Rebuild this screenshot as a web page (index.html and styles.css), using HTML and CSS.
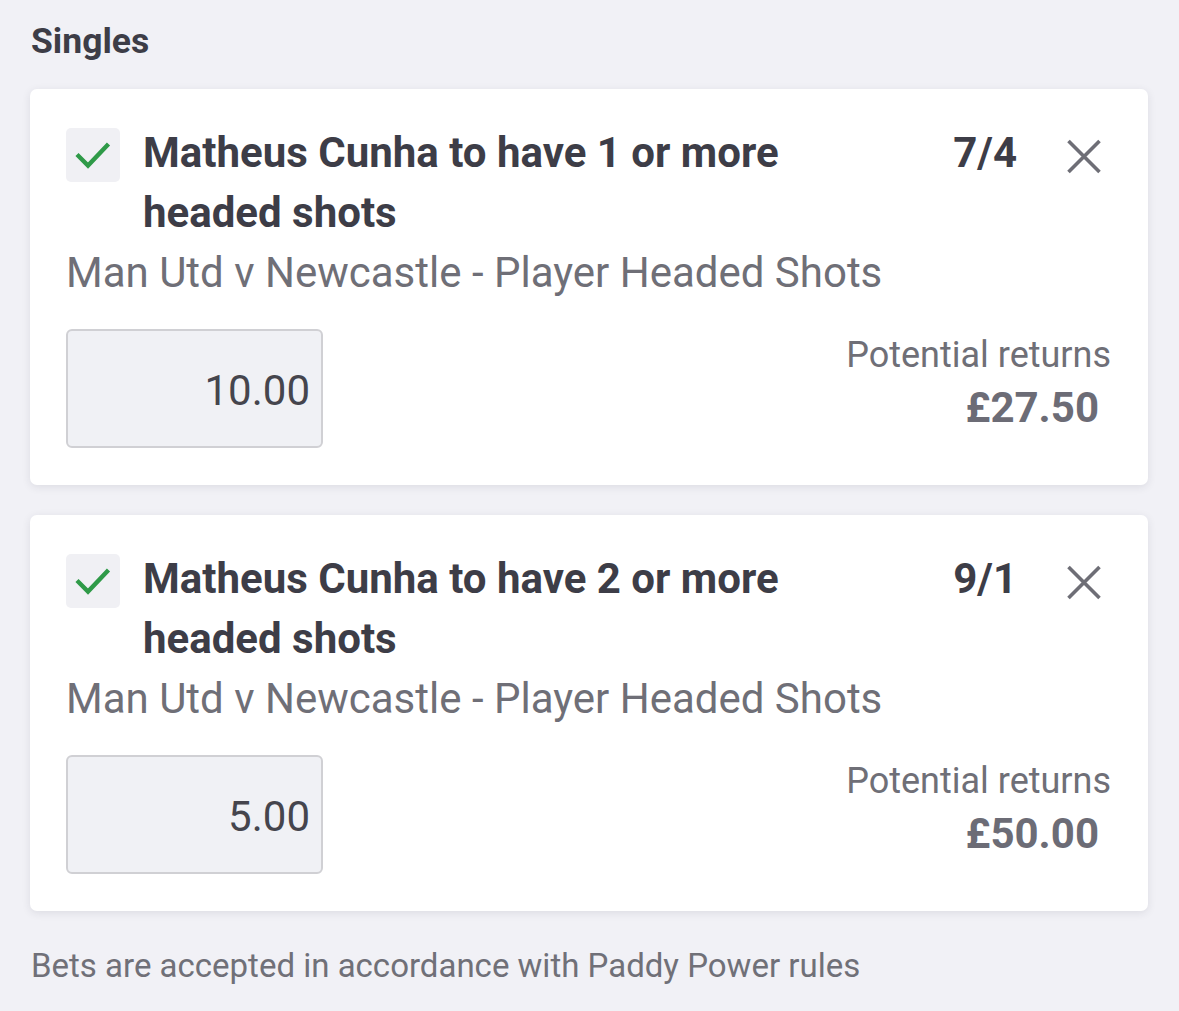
FILE: index.html
```html
<!DOCTYPE html>
<html lang="en">
<head>
<meta charset="utf-8">
<title>Singles</title>
<link rel="stylesheet" href="styles.css">
</head>
<body>
<main class="betslip">
  <h2 class="section-title">Singles</h2>

  <section class="bet-card">
    <div class="bet-head">
      <span class="check">
        <svg viewBox="0 0 54 54" width="54" height="54" aria-hidden="true"><path d="M11 26.5 L22 37.5 L42.5 16" fill="none" stroke="#2f9a48" stroke-width="4.4"/></svg>
      </span>
      <h3 class="selection">Matheus Cunha to have 1 or more headed shots</h3>
      <span class="odds">7/4</span>
      <button class="close" aria-label="Remove">
        <svg viewBox="0 0 54 54" width="54" height="54" aria-hidden="true"><path d="M11.5 12 L42.5 43 M42.5 12 L11.5 43" fill="none" stroke="#6e6e76" stroke-width="3.6"/></svg>
      </button>
    </div>
    <p class="market">Man Utd v Newcastle - Player Headed Shots</p>
    <div class="stake-row">
      <div class="stake">10.00</div>
      <div class="returns">
        <span class="returns-label">Potential returns</span>
        <span class="returns-value">£27.50</span>
      </div>
    </div>
  </section>

  <section class="bet-card">
    <div class="bet-head">
      <span class="check">
        <svg viewBox="0 0 54 54" width="54" height="54" aria-hidden="true"><path d="M11 26.5 L22 37.5 L42.5 16" fill="none" stroke="#2f9a48" stroke-width="4.4"/></svg>
      </span>
      <h3 class="selection">Matheus Cunha to have 2 or more headed shots</h3>
      <span class="odds">9/1</span>
      <button class="close" aria-label="Remove">
        <svg viewBox="0 0 54 54" width="54" height="54" aria-hidden="true"><path d="M11.5 12 L42.5 43 M42.5 12 L11.5 43" fill="none" stroke="#6e6e76" stroke-width="3.6"/></svg>
      </button>
    </div>
    <p class="market">Man Utd v Newcastle - Player Headed Shots</p>
    <div class="stake-row">
      <div class="stake">5.00</div>
      <div class="returns">
        <span class="returns-label">Potential returns</span>
        <span class="returns-value">£50.00</span>
      </div>
    </div>
  </section>

  <p class="footnote">Bets are accepted in accordance with Paddy Power rules</p>
</main>
</body>
</html>
```

FILE: styles.css
```css
* {
  box-sizing: border-box;
}

html, body {
  margin: 0;
  padding: 0;
  background: #f1f1f6;
}

body {
  font-family: Roboto, "Noto Sans", "Liberation Sans", sans-serif;
  color: #3d3d47;
}

.betslip {
  display: flex;
  flex-direction: column;
  padding: 21px 31px 0 30px;
}

.section-title {
  margin: 0 0 28px 1px;
  font-size: 35.5px;
  line-height: 40px;
  font-weight: 700;
  color: #3d3d47;
}

.bet-card {
  background: #ffffff;
  border-radius: 7px;
  box-shadow: 0 2px 8px rgba(40, 40, 60, 0.10);
  padding: 34px 37px 37px 36px;
  margin-bottom: 30px;
}

.bet-head {
  display: flex;
  align-items: flex-start;
}

.check {
  flex: none;
  width: 54px;
  height: 54px;
  margin-top: 5px;
  margin-right: 23px;
  border-radius: 5px;
  background: #f0f0f4;
  display: flex;
}

.selection {
  flex: 1;
  margin: 0;
  font-size: 42px;
  line-height: 60px;
  font-weight: 700;
  color: #3d3d47;
}

.odds {
  flex: none;
  margin-left: 40px;
  font-size: 42px;
  line-height: 60px;
  font-weight: 700;
  color: #3d3d47;
}

.close {
  flex: none;
  width: 54px;
  height: 54px;
  margin: 6px 0 0 40px;
  padding: 0;
  border: 0;
  background: transparent;
  display: flex;
}

.market {
  margin: 0;
  font-size: 42px;
  line-height: 60px;
  color: #6f6f77;
}

.stake-row {
  display: flex;
  justify-content: space-between;
  align-items: flex-start;
  margin-top: 26px;
}

.stake {
  width: 257px;
  height: 119px;
  border: 2.5px solid #d0d0d4;
  border-radius: 6px;
  background: #f0f1f5;
  display: flex;
  align-items: center;
  justify-content: flex-end;
  padding: 4px 11px 0 0;
  font-size: 42px;
  line-height: 49px;
  color: #45454d;
}

.returns {
  display: flex;
  flex-direction: column;
  align-items: flex-end;
  padding-top: 2px;
}

.returns-label {
  font-size: 36px;
  line-height: 48px;
  color: #6f6f77;
}

.returns-value {
  font-size: 42px;
  line-height: 58px;
  font-weight: 700;
  color: #6c6c76;
  padding-right: 12px;
}

.footnote {
  margin: 5px 0 0 1px;
  font-size: 33px;
  line-height: 40px;
  color: #707078;
}
```
